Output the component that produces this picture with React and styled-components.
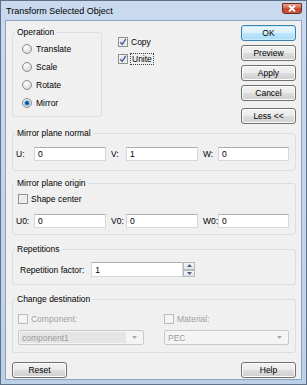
import React from "react";
import styled, {createGlobalStyle} from "styled-components";

const Global = createGlobalStyle`
  html, body {
    margin: 0;
    padding: 0;
    background: #ffffff;
  }
  body {
    font-family: "Liberation Sans", Arial, sans-serif;
    font-size: 8.5px;
    color: #000;
  }
`;

const Window = styled.div`
  width: 307px;
  height: 385px;
  box-sizing: border-box;
  border: 1px solid #5f7188;
  background: linear-gradient(#c9daee, #bcd0e8);
  display: flex;
  flex-direction: column;
`;

const TitleBar = styled.div`
  height: 19px;
  display: flex;
  align-items: center;
  padding: 0 4px 0 5px;
`;

const Title = styled.div`
  flex: 1;
  font-size: 9px;
  color: #000;
`;

const CloseBox = styled.div`
  width: 20px;
  height: 11px;
  margin-top: -4px;
  box-sizing: border-box;
  border: 1px solid #6b2a22;
  border-radius: 0 0 3px 3px;
  background: linear-gradient(#e8a493, #d2664f 45%, #c2402a 55%, #cf5b3f);
  display: flex;
  align-items: center;
  justify-content: center;
`;

const Client = styled.div`
  flex: 1;
  margin: 0 4px 4px 4px;
  border: 1px solid #8ea3bd;
  background: #f0f0f0;
  padding: 4px 5px 0 6px;
  display: flex;
  flex-direction: column;
`;

const TopRow = styled.div`
  display: flex;
  height: 99px;
`;

const Group = styled.fieldset`
  margin: ${p => p.$top || 0}px 0 0 0;
  padding: 0;
  min-width: 0;
  border: 1px solid #d5dfe5;
  border-radius: 3px;
  width: ${p => p.$width ? `${p.$width}px` : "auto"};
  box-sizing: border-box;
  align-self: ${p => p.$width ? "flex-start" : "stretch"};
`;

const Legend = styled.legend`
  margin-left: 2px;
  padding: 0 2px;
  line-height: 12px;
  height: 12px;
`;

const GroupBody = styled.div`
  padding: ${p => p.$pad};
  display: flex;
  flex-direction: column;
  gap: ${p => p.$gap || 0}px;
`;

const OptionRow = styled.label`
  display: flex;
  align-items: center;
  gap: ${p => p.$gap || 4}px;
  height: ${p => p.$h || 18}px;
  padding-left: ${p => p.$indent || 0}px;
  color: ${p => p.$disabled ? "#a0a0a0" : "#000"};
  white-space: nowrap;
`;

const ChecksColumn = styled.div`
  margin-left: 16px;
  padding-top: 8px;
  display: flex;
  flex-direction: column;
`;

const ButtonColumn = styled.div`
  margin-left: auto;
  width: 55px;
  display: flex;
  flex-direction: column;
  gap: 4px;
`;

const Button = styled.button`
  height: 16px;
  width: 55px;
  margin-top: ${p => p.$top || 0}px;
  padding: 0;
  box-sizing: border-box;
  font: inherit;
  color: #000;
  border: 1px solid ${p => p.$default ? "#3c7fb1" : "#707070"};
  border-radius: 3px;
  box-shadow: inset 0 0 0 1px ${p => p.$default ? "#c9ecfd" : "#fcfcfc"};
  background: ${p => p.$default
    ? "linear-gradient(#eaf6fd 0%, #d9f0fc 50%, #bee6fd 51%, #a9dbf6 100%)"
    : "linear-gradient(#f2f2f2 0%, #ebebeb 50%, #dddddd 51%, #cfcfcf 100%)"};
`;

const Focus = styled.span`
  outline: 1px dotted #404040;
  outline-offset: 0;
  padding: 0 1px;
`;

const CoordRow = styled.div`
  display: grid;
  grid-template-columns: 18px 72px 20px 72px 20px 71px;
  align-items: center;
  height: 14px;
`;

const CoordLabel = styled.span`
  padding-left: ${p => p.$indent || 0}px;
  white-space: nowrap;
`;

const TextBox = styled.input`
  width: 100%;
  height: 14px;
  box-sizing: border-box;
  margin: 0;
  padding: 0 3px;
  font: inherit;
  color: #000;
  background: #fff;
  border: 1px solid #d5d9de;
  border-top-color: #abadb3;
  outline: none;
`;

const SpinField = styled.div`
  display: flex;
  width: 104px;
  height: 15px;
  margin-left: ${p => p.$left}px;
`;

const SpinInput = styled(TextBox)`
  height: 15px;
  flex: 1;
`;

const Spinner = styled.div`
  width: 12px;
  display: flex;
  flex-direction: column;
`;

const SpinButton = styled.div`
  flex: 1;
  box-sizing: border-box;
  border: 1px solid #b6b9bd;
  background: linear-gradient(#f4f4f4, #e2e2e2);
  display: flex;
  align-items: center;
  justify-content: center;
`;

const ComboGrid = styled.div`
  display: grid;
  grid-template-columns: 126px 125px;
  column-gap: 20px;
  row-gap: 3px;
`;

const Combo = styled.div`
  height: 15px;
  box-sizing: border-box;
  border: 1px solid #c9c9c9;
  border-radius: 2px;
  background: #f4f4f4;
  color: #9a9a9a;
  display: flex;
  align-items: center;
  padding: 1px 6px 1px 1px;
`;

const ComboText = styled.span`
  flex: 1;
  height: 100%;
  display: flex;
  align-items: center;
  padding-left: 2px;
  margin-right: 6px;
  background: ${p => p.$selected ? "#e5e5e5" : "transparent"};
`;

const BottomRow = styled.div`
  display: flex;
  justify-content: space-between;
  margin-top: 9px;
`;

const Radio = ({checked}) => (
  <svg width="10" height="10" viewBox="0 0 10 10">
    <defs>
      <radialGradient id={checked ? "rgOn" : "rgOff"} cx="40%" cy="35%" r="70%">
        <stop offset="0" stopColor="#ffffff"/>
        <stop offset="1" stopColor="#d4d4d4"/>
      </radialGradient>
    </defs>
    <circle cx="5" cy="5" r="4.5" fill={`url(#${checked ? "rgOn" : "rgOff"})`} stroke="#8d8d8d"/>
    {checked && <circle cx="5" cy="5" r="2.6" fill="#1f6fb6" stroke="#8bc6ec" strokeWidth="0.8"/>}
    {checked && <circle cx="5" cy="5" r="1.1" fill="#0b3f7a"/>}
  </svg>
);

const Check = ({checked, disabled}) => (
  <svg width="10" height="10" viewBox="0 0 10 10">
    <rect x="0.5" y="0.5" width="9" height="9" fill={disabled ? "#f4f4f4" : "#f6f6f6"}
          stroke={disabled ? "#bcbcbc" : "#8e8f8f"}/>
    {!disabled && <rect x="1.5" y="1.5" width="7" height="7" fill="#e2e2e2" opacity="0.6"/>}
    {checked && <path d="M2.3 5.2 L4.2 7.4 L7.8 1.8" fill="none" stroke="#4a5f97" strokeWidth="1.4"/>}
  </svg>
);

const Arrow = ({up, color = "#4d6185"}) => (
  <svg width="5" height="3" viewBox="0 0 5 3">
    <path d={up ? "M0 3 L2.5 0 L5 3 Z" : "M0 0 L2.5 3 L5 0 Z"} fill={color}/>
  </svg>
);

const operations = [
  {name: "Translate"},
  {name: "Scale"},
  {name: "Rotate"},
  {name: "Mirror", checked: true},
];

const Coords = ({labels, values}) => (
  <CoordRow>
    <CoordLabel>{labels[0]}</CoordLabel>
    <TextBox readOnly value={values[0]}/>
    <CoordLabel $indent={5}>{labels[1]}</CoordLabel>
    <TextBox readOnly value={values[1]}/>
    <CoordLabel $indent={5}>{labels[2]}</CoordLabel>
    <TextBox readOnly value={values[2]}/>
  </CoordRow>
);

export default function App() {
  return (
    <>
      <Global/>
      <Window>
        <TitleBar>
          <Title>Transform Selected Object</Title>
          <CloseBox>
            <svg width="8" height="7" viewBox="0 0 8 7">
              <path d="M1 0.5 L7 6.5 M7 0.5 L1 6.5" stroke="#ffffff" strokeWidth="1.8"/>
            </svg>
          </CloseBox>
        </TitleBar>
        <Client>
          <TopRow>
            <Group $width={90} $top={1}>
              <Legend>Operation</Legend>
              <GroupBody $pad="2px 0 4px 9px">
                {operations.map(op => (
                  <OptionRow key={op.name}>
                    <Radio checked={op.checked}/>
                    {op.name}
                  </OptionRow>
                ))}
              </GroupBody>
            </Group>
            <ChecksColumn>
              <OptionRow $h={17} $gap={3}><Check checked/>Copy</OptionRow>
              <OptionRow $h={17} $gap={3}><Check checked/><Focus>Unite</Focus></OptionRow>
            </ChecksColumn>
            <ButtonColumn>
              <Button $default>OK</Button>
              <Button>Preview</Button>
              <Button>Apply</Button>
              <Button>Cancel</Button>
              <Button $top={3}>Less &lt;&lt;</Button>
            </ButtonColumn>
          </TopRow>

          <Group $top={3}>
            <Legend>Mirror plane normal</Legend>
            <GroupBody $pad="8px 0 9px 3px">
              <Coords labels={["U:", "V:", "W:"]} values={["0", "1", "0"]}/>
            </GroupBody>
          </Group>

          <Group $top={6}>
            <Legend>Mirror plane origin</Legend>
            <GroupBody $pad="2px 0 6px 3px" $gap={7}>
              <OptionRow $h={16} $gap={3} $indent={2}><Check/>Shape center</OptionRow>
              <Coords labels={["U0:", "V0:", "W0:"]} values={["0", "0", "0"]}/>
            </GroupBody>
          </Group>

          <Group $top={8}>
            <Legend>Repetitions</Legend>
            <GroupBody $pad="7px 0 7px 7px">
              <OptionRow $h={15} $gap={0}>
                Repetition factor:
                <SpinField $left={3}>
                  <SpinInput readOnly value="1"/>
                  <Spinner>
                    <SpinButton><Arrow up/></SpinButton>
                    <SpinButton><Arrow/></SpinButton>
                  </Spinner>
                </SpinField>
              </OptionRow>
            </GroupBody>
          </Group>

          <Group $top={8}>
            <Legend>Change destination</Legend>
            <GroupBody $pad="5px 0 7px 5px">
              <ComboGrid>
                <OptionRow $h={17} $gap={3} $disabled><Check disabled/>Component:</OptionRow>
                <OptionRow $h={17} $gap={3} $disabled><Check disabled/>Material:</OptionRow>
                <Combo>
                  <ComboText $selected>component1</ComboText>
                  <Arrow color="#a8a8a8"/>
                </Combo>
                <Combo>
                  <ComboText>PEC</ComboText>
                  <Arrow color="#a8a8a8"/>
                </Combo>
              </ComboGrid>
            </GroupBody>
          </Group>

          <BottomRow>
            <Button>Reset</Button>
            <Button>Help</Button>
          </BottomRow>
        </Client>
      </Window>
    </>
  );
}
